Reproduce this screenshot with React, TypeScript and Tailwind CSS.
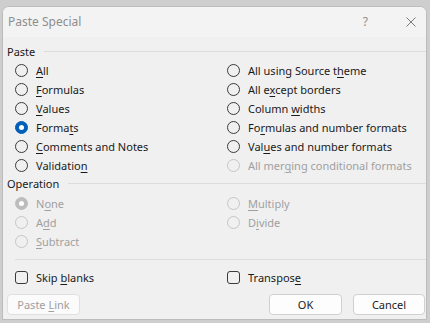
import React from "react";

type Opt = { label: string; checked?: boolean; disabled?: boolean };

// "&" marks the accelerator letter, as in the Win32 resource
function Accel({ text }: { text: string }) {
  const i = text.indexOf("&");
  if (i < 0) return <>{text}</>;
  return (
    <>
      {text.slice(0, i)}
      <span className="underline underline-offset-[2px] decoration-1">{text[i + 1]}</span>
      {text.slice(i + 2)}
    </>
  );
}

function Radio({ label, checked, disabled }: Opt) {
  let circle = "border-[#3a3a3a]";
  if (checked && !disabled) circle = "border-[#005fb8] bg-[#005fb8]";
  else if (checked && disabled) circle = "border-[#bdbdbd] bg-[#bdbdbd]";
  else if (disabled) circle = "border-[#c6c6c6]";
  return (
    <div className="h-[19px] flex items-center">
      <div className={`w-[13px] h-[13px] rounded-full border flex items-center justify-center ${circle}`}>
        {checked && <div className="w-[5px] h-[5px] rounded-full bg-white" />}
      </div>
      <span className={`ml-[8px] ${disabled ? "text-[#a0a0a0]" : "text-[#1a1a1a]"}`}>
        <Accel text={label} />
      </span>
    </div>
  );
}

function Check({ label }: { label: string }) {
  return (
    <div className="h-[19px] flex items-center">
      <div className="w-[13px] h-[13px] rounded-[3px] border border-[#3a3a3a]" />
      <span className="ml-[8px] text-[#1a1a1a]">
        <Accel text={label} />
      </span>
    </div>
  );
}

function GroupLabel({ title }: { title: string }) {
  return (
    <div className="h-[16px] flex items-center pl-[4px]">
      <span className="text-[#1a1a1a]">{title}</span>
      <div className="flex-1 ml-[9px] h-px bg-[#dcdcdc]" />
    </div>
  );
}

const pasteLeft: Opt[] = [
  { label: "&All" },
  { label: "&Formulas" },
  { label: "&Values" },
  { label: "Forma&ts", checked: true },
  { label: "&Comments and Notes" },
  { label: "Validatio&n" },
];

const pasteRight: Opt[] = [
  { label: "All using Source t&heme" },
  { label: "All e&xcept borders" },
  { label: "Column &widths" },
  { label: "Fo&rmulas and number formats" },
  { label: "Val&ues and number formats" },
  { label: "All mer&ging conditional formats", disabled: true },
];

const opLeft: Opt[] = [
  { label: "N&one", checked: true, disabled: true },
  { label: "A&dd", disabled: true },
  { label: "&Subtract", disabled: true },
];

const opRight: Opt[] = [
  { label: "&Multiply", disabled: true },
  { label: "D&ivide", disabled: true },
];

export default function App() {
  return (
    <div
      className="w-[430px] h-[323px] bg-[#cecece] pt-[6px] pl-[2px] pr-[3px] pb-[3px] text-[11px] leading-none"
      style={{ fontFamily: '"Noto Sans", "Liberation Sans", sans-serif' }}
    >
      <div className="h-full flex flex-col bg-[#f0f0f0] border border-[#bcbcbc] rounded-t-[7px] overflow-hidden">
        {/* Title bar */}
        <div className="h-[30px] shrink-0 bg-[#f3f3f3] flex items-center pl-[5px]">
          <span className="text-[12px] text-[#8e8e8e]">Paste Special</span>
          <span className="ml-auto text-[12px] text-[#8e8e8e]">?</span>
          <svg className="ml-[38px] mr-[10px]" width="10" height="10" viewBox="0 0 10 10">
            <path d="M0.5 0.5 L9.5 9.5 M9.5 0.5 L0.5 9.5" stroke="#7a7a7a" strokeWidth="1" />
          </svg>
        </div>

        {/* Body */}
        <div className="flex-1 flex flex-col pt-[6px]">
          <GroupLabel title="Paste" />
          <div className="mt-[2px] pl-[12px] grid grid-cols-[212px_1fr]">
            <div>
              {pasteLeft.map((o) => (
                <Radio key={o.label} {...o} />
              ))}
            </div>
            <div>
              {pasteRight.map((o) => (
                <Radio key={o.label} {...o} />
              ))}
            </div>
          </div>

          <GroupLabel title="Operation" />
          <div className="mt-[3px] pl-[12px] grid grid-cols-[212px_1fr]">
            <div>
              {opLeft.map((o) => (
                <Radio key={o.label} {...o} />
              ))}
            </div>
            <div>
              {opRight.map((o) => (
                <Radio key={o.label} {...o} />
              ))}
            </div>
          </div>

          <div className="mt-[8px] ml-[12px] h-px bg-[#dcdcdc]" />

          <div className="mt-[8px] pl-[12px] grid grid-cols-[212px_1fr]">
            <Check label="Skip &blanks" />
            <Check label="Transpos&e" />
          </div>

          <div className="mt-[7px] flex pl-[4px] pr-[1px]">
            <button className="w-[73px] h-[21px] rounded-[4px] border border-[#e0e0e0] bg-[#fbfbfb] text-[#a0a0a0]">
              <Accel text="Paste &Link" />
            </button>
            <button className="ml-auto w-[73px] h-[21px] rounded-[4px] border border-[#d0d0d0] bg-[#fdfdfd] text-[#1a1a1a]">
              OK
            </button>
            <button className="ml-[11px] w-[72px] h-[21px] rounded-[4px] border border-[#d0d0d0] bg-[#fdfdfd] text-[#1a1a1a]">
              Cancel
            </button>
          </div>
        </div>
      </div>
    </div>
  );
}
